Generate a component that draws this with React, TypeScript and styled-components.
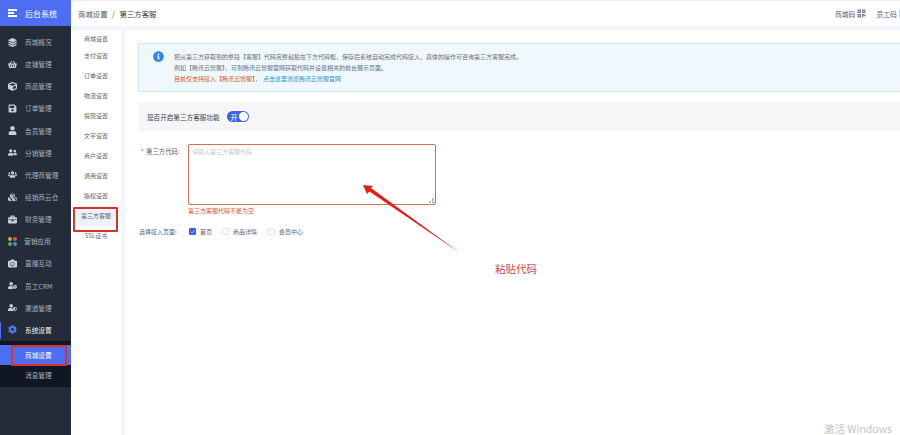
import React from "react";
import styled, { createGlobalStyle } from "styled-components";
import { Check } from "lucide-react";
import {
  FaLayerGroup,
  FaShoppingBasket,
  FaCube,
  FaSave,
  FaUser,
  FaUserFriends,
  FaUsers,
  FaCubes,
  FaBriefcase,
  FaCamera,
  FaUserCog,
  FaUserShield,
  FaCog,
  FaInfoCircle,
  FaQrcode,
} from "react-icons/fa";

const GlobalStyle = createGlobalStyle`
  html, body { margin: 0; padding: 0; background: #fff; }
  body { font-family: "Noto Sans CJK SC", "Liberation Sans", sans-serif; overflow: hidden; }
`;

const Page = styled.div`
  position: relative;
  display: flex;
  width: 900px;
  height: 435px;
  overflow: hidden;
`;

const Sidebar = styled.aside`
  width: 71px;
  flex: none;
  background: #232c38;
  display: flex;
  flex-direction: column;
`;

const Brand = styled.div`
  height: 26px;
  background: #4e6ef2;
  display: flex;
  align-items: center;
  gap: 8px;
  padding-left: 8px;
  margin-bottom: 5px;
  color: #fff;
  font-size: 8px;
`;

const Burger = styled.span`
  width: 9px;
  height: 8px;
  border-top: 2px solid #fff;
  border-bottom: 2px solid #fff;
  position: relative;
  box-sizing: border-box;
  &::after {
    content: "";
    position: absolute;
    left: 0;
    top: 1px;
    width: 6px;
    height: 2px;
    background: #fff;
  }
`;

const NavItem = styled.div<{ $active?: boolean }>`
  height: 22.15px;
  display: flex;
  align-items: center;
  gap: 8px;
  padding-left: 8px;
  position: relative;
  box-sizing: border-box;
  font-size: 6.7px;
  color: ${(p) => (p.$active ? "#f2f4f8" : "#a9b0bb")};
  svg {
    width: 9px;
    height: 9px;
    flex: none;
    color: ${(p) => (p.$active ? "#5a78f5" : "#c9ced6")};
  }
  &::before {
    content: "";
    display: ${(p) => (p.$active ? "block" : "none")};
    position: absolute;
    left: 0;
    top: 3px;
    bottom: 2px;
    width: 1px;
    background: #4e6ef2;
  }
`;

const SubNav = styled.div`
  background: #101722;
  display: flex;
  flex-direction: column;
  padding: 4px 0 2px;
`;

const SubNavItem = styled.div<{ $active?: boolean }>`
  height: 20px;
  display: flex;
  align-items: center;
  padding-left: 25px;
  font-size: 6.7px;
  color: ${(p) => (p.$active ? "#fff" : "#a9b0bb")};
  background: ${(p) => (p.$active ? "#4e6ef2" : "transparent")};
`;

const Dots = styled.span`
  display: grid;
  grid-template-columns: 4px 4px;
  gap: 1px;
  flex: none;
  margin-right: -1px;
`;

const Dot = styled.i<{ $color: string }>`
  width: 4px;
  height: 4px;
  border-radius: 50%;
  background: ${(p) => p.$color};
`;

const Main = styled.div`
  flex: 1;
  min-width: 0;
  display: flex;
  flex-direction: column;
`;

const TopBar = styled.header`
  height: 26px;
  flex: none;
  background: #fff;
  display: flex;
  align-items: center;
  padding-left: 7px;
  font-size: 7.4px;
  color: #555b66;
  border-top: 1px solid #eeeeee;
  box-sizing: border-box;
`;

const Crumb = styled.span`
  margin: 0 4.5px;
`;

const CrumbStrong = styled.span`
  color: #333;
`;

const TopRight = styled.div`
  margin-left: auto;
  display: flex;
  align-items: center;
  width: 65px;
  white-space: nowrap;
  gap: 2px;
  font-size: 6.8px;
`;

const QrMark = styled(FaQrcode)`
  width: 9px;
  height: 9px;
  margin-right: 8px;
  flex: none;
  color: #777c85;
`;

const Strip = styled.div`
  height: 5px;
  flex: none;
  background: #f3f4fc;
`;

const Body = styled.div`
  flex: 1;
  display: flex;
  min-height: 0;
`;

const SubMenu = styled.nav`
  width: 50px;
  flex: none;
  background: #fff;
  display: flex;
  flex-direction: column;
  align-items: center;
`;

const SubMenuItem = styled.div<{ $active?: boolean }>`
  width: 39px;
  height: 20.1px;
  flex: none;
  display: flex;
  align-items: center;
  justify-content: center;
  font-size: 6px;
  color: #5c6470;
  white-space: nowrap;
  border-radius: 2px;
  background: ${(p) => (p.$active ? "#eef0fb" : "transparent")};
  &:first-child {
    height: 14.1px;
  }
`;

const Gutter = styled.div`
  width: 4px;
  flex: none;
  background: #f3f4fc;
`;

const Content = styled.section`
  flex: 1;
  min-width: 0;
  background: #fff;
  padding: 12px 0 0 13px;
`;

const Notice = styled.div`
  width: 775px;
  height: 49px;
  box-sizing: border-box;
  background: #eff8fd;
  border: 1px solid #cfe6ec;
  border-radius: 2px;
  padding: 7px 0 0 14px;
  display: flex;
  gap: 10px;
`;

const NoticeIcon = styled(FaInfoCircle)`
  width: 11px;
  height: 11px;
  color: #2f86e6;
  flex: none;
`;

const NoticeLines = styled.div`
  font-size: 6px;
  line-height: 11px;
  color: #68707c;
  white-space: nowrap;
`;

const Warn = styled.span`
  color: #d0523f;
`;

const NoticeLink = styled.span`
  color: #3f8ecb;
  margin-left: 2px;
`;

const SwitchRow = styled.div`
  width: 775px;
  height: 29px;
  margin-top: 10px;
  box-sizing: border-box;
  background: #f6f6f8;
  display: flex;
  align-items: center;
  padding-left: 9px;
  gap: 7px;
  font-size: 6.6px;
  color: #3c424c;
`;

const Toggle = styled.span`
  width: 22px;
  height: 11px;
  border-radius: 6px;
  background: #4164dc;
  color: #fff;
  font-size: 7px;
  display: flex;
  align-items: center;
  justify-content: space-between;
  padding: 0 1px 0 4px;
  box-sizing: border-box;
  &::after {
    content: "";
    width: 9px;
    height: 9px;
    border-radius: 50%;
    background: #fff;
  }
`;

const FieldRow = styled.div`
  display: flex;
  margin-top: 13px;
`;

const FieldLabel = styled.div`
  width: 47px;
  flex: none;
  font-size: 6.4px;
  line-height: 10px;
  color: #5c6470;
  padding: 3px 0 0 3px;
  white-space: nowrap;
`;

const Star = styled.span`
  color: #d0523f;
  margin-right: 2px;
`;

const CodeBox = styled.div`
  width: 248px;
  height: 61px;
  box-sizing: border-box;
  border: 1px solid #d0705c;
  border-radius: 2px;
  padding: 1px 3px;
  font-size: 6px;
  line-height: 11px;
  color: #c4c7cc;
  position: relative;
  &::after {
    content: "";
    position: absolute;
    right: 1px;
    bottom: 1px;
    width: 5px;
    height: 5px;
    background: linear-gradient(135deg, transparent 50%, #999 50%, #999 60%, transparent 60%, transparent 75%, #999 75%);
  }
`;

const FieldError = styled.div`
  margin: 1px 0 0 50px;
  font-size: 6px;
  line-height: 10px;
  color: #d0523f;
`;

const PagesRow = styled.div`
  display: flex;
  align-items: center;
  margin-top: 11px;
  font-size: 6px;
  color: #5c6470;
`;

const PagesLabel = styled.div`
  width: 51px;
  padding-left: 1px;
  box-sizing: border-box;
  flex: none;
  white-space: nowrap;
`;

const CheckItem = styled.label<{ $width: number }>`
  display: flex;
  align-items: center;
  gap: 4px;
  width: ${(p) => p.$width}px;
  white-space: nowrap;
`;

const CheckBox = styled.span<{ $on?: boolean }>`
  width: 7px;
  height: 7px;
  flex: none;
  box-sizing: border-box;
  border-radius: 1px;
  border: 1px solid ${(p) => (p.$on ? "#3e5fd6" : "#e2e3e8")};
  background: ${(p) => (p.$on ? "#3e5fd6" : "#fff")};
  color: #fff;
  display: flex;
  align-items: center;
  justify-content: center;
`;

const Highlight = styled.div<{ $x: number; $y: number; $w: number; $h: number }>`
  position: absolute;
  left: ${(p) => p.$x}px;
  top: ${(p) => p.$y}px;
  width: ${(p) => p.$w}px;
  height: ${(p) => p.$h}px;
  box-sizing: border-box;
  border: 2px solid #d8322f;
  border-radius: 1px;
  pointer-events: none;
`;

const Arrow = styled.svg`
  position: absolute;
  left: 355px;
  top: 175px;
  width: 115px;
  height: 85px;
`;

const PasteNote = styled.div`
  position: absolute;
  left: 495px;
  top: 261px;
  font-size: 10.5px;
  line-height: 16px;
  color: #cf4a40;
`;

const Watermark = styled.div`
  position: absolute;
  left: 824px;
  top: 423px;
  font-size: 10.5px;
  line-height: 12px;
  color: #c4c4c4;
  white-space: nowrap;
`;

const navItems = [
  { label: "商城概况", icon: <FaLayerGroup /> },
  { label: "店铺管理", icon: <FaShoppingBasket /> },
  { label: "商品管理", icon: <FaCube /> },
  { label: "订单管理", icon: <FaSave /> },
  { label: "会员管理", icon: <FaUser /> },
  { label: "分销管理", icon: <FaUserFriends /> },
  { label: "代理商管理", icon: <FaUsers /> },
  { label: "经销商云仓", icon: <FaCubes /> },
  { label: "财务管理", icon: <FaBriefcase /> },
  {
    label: "营销应用",
    icon: (
      <Dots>
        <Dot $color="#e8a13a" />
        <Dot $color="#e2583f" />
        <Dot $color="#4caf6a" />
        <Dot $color="#3f8ee0" />
      </Dots>
    ),
  },
  { label: "直播互动", icon: <FaCamera /> },
  { label: "员工CRM", icon: <FaUserCog /> },
  { label: "渠道管理", icon: <FaUserShield /> },
];

const subMenu = [
  "商城设置",
  "支付设置",
  "订单设置",
  "物流设置",
  "提现设置",
  "文字设置",
  "商户设置",
  "通用设置",
  "版权设置",
  "第三方客服",
  "SSL证书",
];

export default function App() {
  return (
    <Page>
      <GlobalStyle />
      <Sidebar>
        <Brand>
          <Burger />
          后台系统
        </Brand>
        {navItems.map((item) => (
          <NavItem key={item.label}>
            {item.icon}
            {item.label}
          </NavItem>
        ))}
        <NavItem $active>
          <FaCog />
          系统设置
        </NavItem>
        <SubNav>
          <SubNavItem $active>商城设置</SubNavItem>
          <SubNavItem>消息管理</SubNavItem>
        </SubNav>
      </Sidebar>
      <Main>
        <TopBar>
          商城设置
          <Crumb>/</Crumb>
          <CrumbStrong>第三方客服</CrumbStrong>
          <TopRight>
            商城码
            <QrMark />
            员工码
            <QrMark />
          </TopRight>
        </TopBar>
        <Strip />
        <Body>
          <SubMenu>
            {subMenu.map((label) => (
              <SubMenuItem key={label} $active={label === "第三方客服"}>
                {label}
              </SubMenuItem>
            ))}
          </SubMenu>
          <Gutter />
          <Content>
            <Notice>
              <NoticeIcon />
              <NoticeLines>
                <div>把从第三方获取到的整段【客服】代码完整粘贴在下方代码框，保存后系统自动完成代码接入，具体的操作可咨询第三方客服完成。</div>
                <div>例如【腾讯云智服】，可到腾讯云智服官网获取代码并设置相关的前台展示页面。</div>
                <div>
                  <Warn>目前仅支持接入【腾讯云智服】，</Warn>
                  <NoticeLink>点击这里浏览腾讯云智服官网</NoticeLink>
                </div>
              </NoticeLines>
            </Notice>
            <SwitchRow>
              是否开启第三方客服功能
              <Toggle>开</Toggle>
            </SwitchRow>
            <FieldRow>
              <FieldLabel>
                <Star>*</Star>第三方代码:
              </FieldLabel>
              <CodeBox>请输入第三方客服代码</CodeBox>
            </FieldRow>
            <FieldError>第三方客服代码不能为空</FieldError>
            <PagesRow>
              <PagesLabel>选择接入页面:</PagesLabel>
              <CheckItem $width={33}>
                <CheckBox $on>
                  <Check size={6} strokeWidth={3} />
                </CheckBox>
                首页
              </CheckItem>
              <CheckItem $width={46}>
                <CheckBox />
                商品详情
              </CheckItem>
              <CheckItem $width={46}>
                <CheckBox />
                会员中心
              </CheckItem>
            </PagesRow>
          </Content>
        </Body>
      </Main>
      <Highlight $x={73} $y={207} $w={45} $h={25} />
      <Highlight $x={11} $y={345} $w={56} $h={21} />
      <Arrow viewBox="0 0 115 85">
        <path d="M8 10 L18 11 L16 13 L105 78 L14.5 16.5 L12 19 Z" fill="#e0201c" />
      </Arrow>
      <PasteNote>粘贴代码</PasteNote>
      <Watermark>激活 Windows</Watermark>
    </Page>
  );
}
